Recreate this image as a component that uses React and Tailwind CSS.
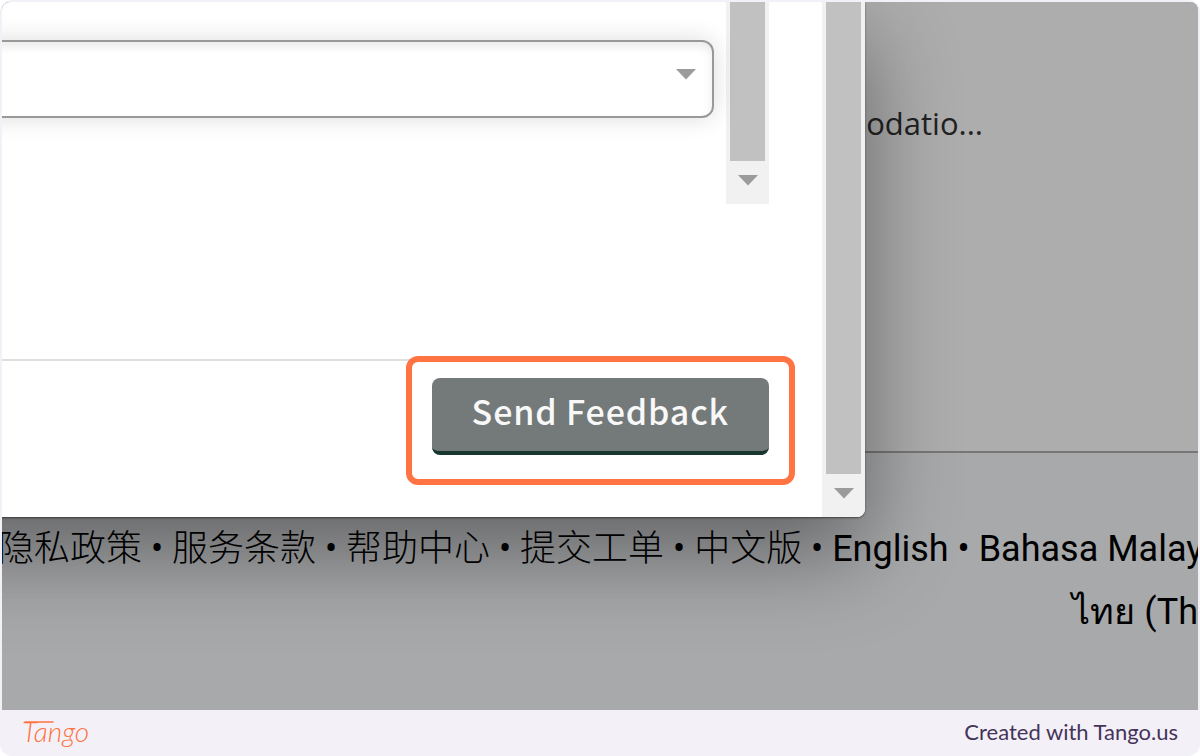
const links = ['隐私政策', '服务条款', '帮助中心', '提交工单', '中文版'];

function ArrowDown() {
    return (
        <svg className="w-5 h-[11px]" viewBox="0 0 20 11" aria-hidden="true">
            <path d="M0 0h20L10 10.5z" fill="#9b9b9b" />
        </svg>
    );
}

function ScrollBar() {
    return (
        <div className="flex flex-col w-[43px] shrink-0 bg-[#f1f1f1]">
            <div className="flex-1 mx-1 bg-[#c1c1c1]" />
            <div className="h-[43px] pb-1 flex items-center justify-center">
                <ArrowDown />
            </div>
        </div>
    );
}

function FeedbackDialog() {
    return (
        <div
            role="dialog"
            aria-label="Send Feedback"
            className="absolute top-0 -left-32 right-[333px] flex bg-white rounded-br-lg overflow-hidden shadow-[0_1px_2px_rgba(0,0,0,0.5),0_36px_90px_rgba(0,0,0,0.42)]"
        >
            <div className="flex-1 min-w-0">
                <div className="flex h-[202px] mr-[53px]">
                    <div className="flex-1 min-w-0 pt-[38px] pr-3">
                        <div className="relative">
                            <select
                                aria-label="Feedback type"
                                className="block w-full h-[78px] appearance-none bg-white border-2 border-[#999] rounded-xl shadow-[0_0_24px_rgba(0,0,0,0.14),inset_0_5px_10px_rgba(0,0,0,0.08)]"
                            />
                            <span className="absolute top-0 right-[18px] h-[68px] flex items-center pointer-events-none">
                                <ArrowDown />
                            </span>
                        </div>
                    </div>
                    <ScrollBar />
                </div>
                <div className="mt-[155px] mr-[53px] pt-[17px] pb-[62px] border-t-2 border-[#dedede] flex justify-end">
                    <div className="relative">
                        <button
                            type="button"
                            className="block h-[77px] px-10 pb-2 rounded-lg bg-[#747a79] border-b-4 border-[#17372f] text-[#f8f8f8] text-[34px] font-medium tracking-wide whitespace-nowrap font-['Noto_Sans_CJK_SC',sans-serif]"
                        >
                            Send Feedback
                        </button>
                        <div className="absolute -top-[22px] -bottom-[30px] -inset-x-[26px] border-6 border-[#ff7442] rounded-xl pointer-events-none" />
                    </div>
                </div>
            </div>
            <ScrollBar />
        </div>
    );
}

export default function App() {
    return (
        <div className="bg-[#f3f1f7] rounded-xl px-[2px] pt-[2px]">
            <main className="relative overflow-hidden rounded-t-lg bg-[#a8a9ab] text-black">
                <section className="h-[451px] pt-[98px] pr-[215px] bg-[#adadad] border-b-2 border-[#777] text-right">
                    <p className="text-[31px] leading-[46px] text-[#222] font-['Open_Sans',sans-serif]">odatio...</p>
                </section>
                <footer className="pt-[65px] pb-[66px] text-4xl leading-[63px] whitespace-nowrap font-[Roboto,'Noto_Sans_CJK_SC',sans-serif]">
                    <nav className="-ml-1">
                        {links.map((link) => (
                            <span key={link}>
                                <a href="#" className="font-light">{link}</a>
                                {' • '}
                            </span>
                        ))}
                        <a href="#">English</a>
                        {' • '}
                        <a href="#">Bahasa Malay</a>
                    </nav>
                    <p className="text-right">
                        <a href="#">ไทย (Th</a>
                    </p>
                </footer>
                <FeedbackDialog />
            </main>

            <div className="h-[46px] px-5 pb-1 flex items-center justify-between">
                <a href="#" className="relative text-[28px] leading-8 italic font-light text-[#ff7442] font-[Lato,sans-serif]">
                    Tango
                    <svg className="absolute top-1 left-0 w-8 h-2" viewBox="0 0 32 8" fill="none" aria-hidden="true">
                        <path d="M3 3h28" stroke="#ff7442" strokeWidth="1.5" strokeLinecap="round" />
                    </svg>
                </a>
                <span className="text-[22px] text-[#45345a] font-[Lato,sans-serif]">Created with Tango.us</span>
            </div>
        </div>
    );
}
